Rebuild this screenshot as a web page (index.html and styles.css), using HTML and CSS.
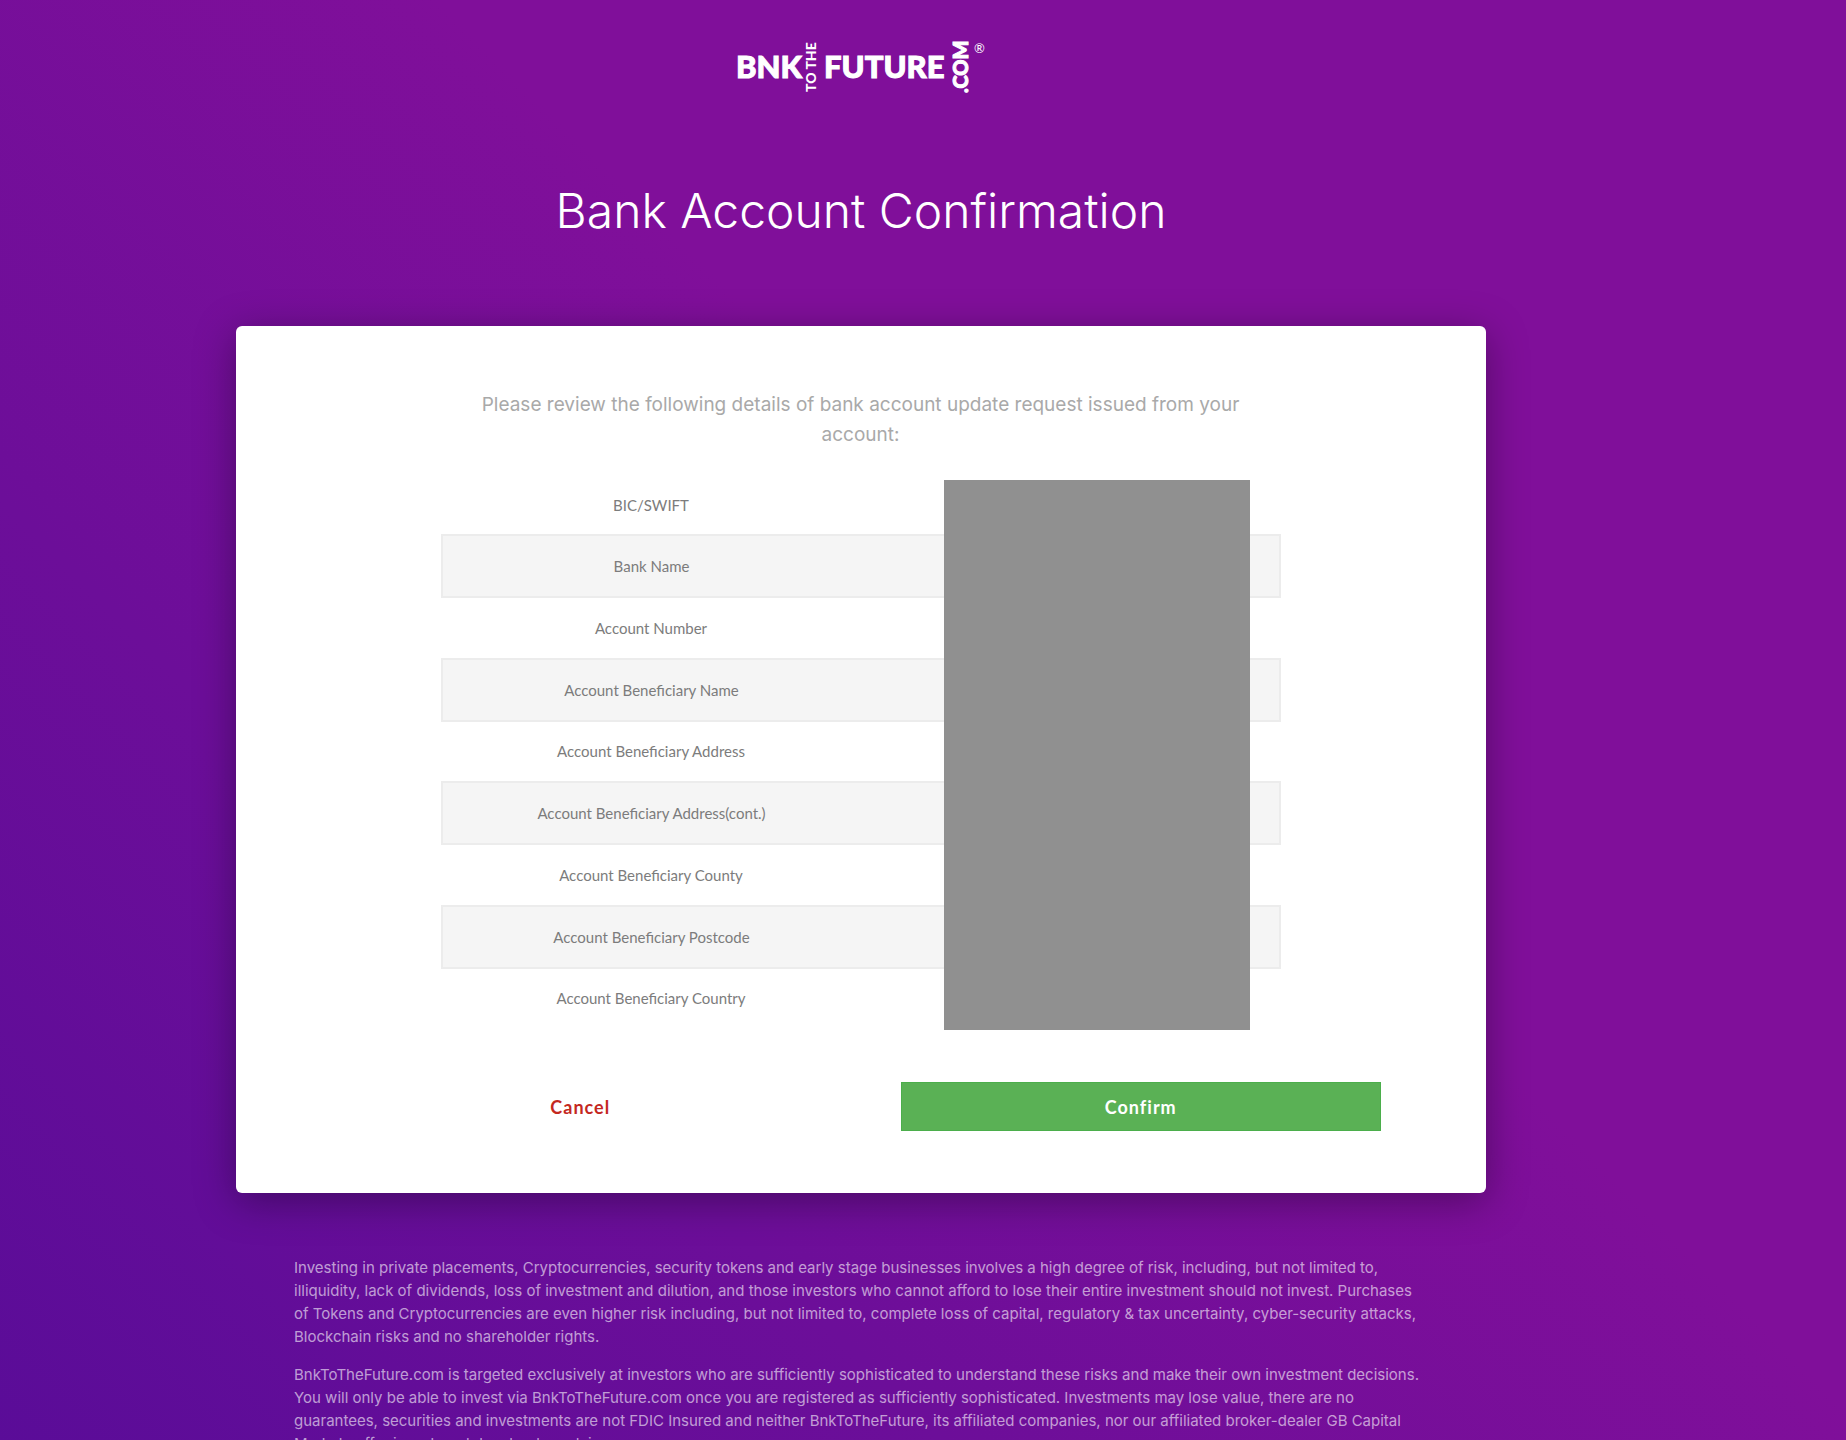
FILE: index.html
```html
<!DOCTYPE html>
<html lang="en">
<head>
    <meta charset="UTF-8">
    <meta name="viewport" content="width=device-width, initial-scale=1.0">
    <title>Bank Account Confirmation</title>
    <link rel="stylesheet" href="styles.css">
</head>
<body>
    <div class="page">
        <header>
            <a class="logo" href="#" aria-label="BnkToTheFuture.com">
                <svg width="252" height="60" viewBox="0 0 252 60">
                    <g class="logo-main">
                        <text x="1" y="40">BNK</text>
                        <text x="89" y="40">FUTURE</text>
                    </g>
                    <text class="logo-side" transform="translate(81 54) rotate(-90)">TO THE</text>
                    <text class="logo-com" transform="translate(233 55) rotate(-90)">.COM</text>
                    <text class="logo-mark" x="239" y="15">®</text>
                </svg>
            </a>
            <h1>Bank Account Confirmation</h1>
        </header>

        <main class="card">
            <p class="intro">Please review the following details of bank account update request issued from your account:</p>

            <div class="details">
                <table>
                    <tr><th scope="row">BIC/SWIFT</th><td></td></tr>
                    <tr><th scope="row">Bank Name</th><td></td></tr>
                    <tr><th scope="row">Account Number</th><td></td></tr>
                    <tr><th scope="row">Account Beneficiary Name</th><td></td></tr>
                    <tr><th scope="row">Account Beneficiary Address</th><td></td></tr>
                    <tr><th scope="row">Account Beneficiary Address(cont.)</th><td></td></tr>
                    <tr><th scope="row">Account Beneficiary County</th><td></td></tr>
                    <tr><th scope="row">Account Beneficiary Postcode</th><td></td></tr>
                    <tr><th scope="row">Account Beneficiary Country</th><td></td></tr>
                </table>
                <div class="redacted"></div>
            </div>

            <div class="actions">
                <button type="button" class="btn btn-cancel">Cancel</button>
                <button type="button" class="btn btn-confirm">Confirm</button>
            </div>
        </main>

        <footer>
            <p>
                Investing in private placements, Cryptocurrencies, security tokens and early stage businesses involves a high degree of risk, including, but not limited to,
                illiquidity, lack of dividends, loss of investment and dilution, and those investors who cannot afford to lose their entire investment should not invest. Purchases
                of Tokens and Cryptocurrencies are even higher risk including, but not limited to, complete loss of capital, regulatory &amp; tax uncertainty, cyber-security attacks,
                Blockchain risks and no shareholder rights.
            </p>
            <p>
                BnkToTheFuture.com is targeted exclusively at investors who are sufficiently sophisticated to understand these risks and make their own investment decisions.
                You will only be able to invest via BnkToTheFuture.com once you are registered as sufficiently sophisticated. Investments may lose value, there are no
                guarantees, securities and investments are not FDIC Insured and neither BnkToTheFuture, its affiliated companies, nor our affiliated broker-dealer GB Capital
                Markets offer investment, legal or tax advice.
            </p>
        </footer>
    </div>
</body>
</html>
```

FILE: styles.css
```css
* {
    box-sizing: border-box;
}
body {
    margin: 0;
    min-height: 100vh;
    font-family: Inter, sans-serif;
    background: linear-gradient(45deg, #590c98 0%, #6c0e99 30%, #800f9a 58%, #800f9a 100%);
}
.page {
    padding: 38px 124px 32px 0;
}

/* Header */
header {
    text-align: center;
}
.logo {
    display: block;
    width: 252px;
    margin: 0 auto;
}
.logo svg {
    display: block;
    fill: #fff;
    font-family: Lato, sans-serif;
    font-weight: 900;
}
.logo-main {
    font-size: 31px;
    stroke: #fff;
    stroke-width: 1px;
}
.logo-side {
    font-size: 14px;
}
.logo-com {
    font-size: 20px;
    stroke: #fff;
    stroke-width: 1px;
}
.logo-mark {
    font-size: 13px;
    font-weight: 400;
}
h1 {
    margin: 80px 0 82px;
    font-size: 48px;
    font-weight: 300;
    line-height: 66px;
    color: #fff;
}

/* Card */
.card {
    width: 1250px;
    max-width: 100%;
    margin: 0 auto;
    padding: 64px 105px 62px 104px;
    background: #fff;
    border-radius: 6px;
    box-shadow: 0 8px 40px rgba(0, 0, 0, 0.35);
}
.intro {
    max-width: 840px;
    margin: 0 auto;
    padding: 0 32px;
    font-size: 19px;
    line-height: 30px;
    text-align: center;
    color: #a9a9a9;
}

/* Details */
.details {
    position: relative;
    max-width: 840px;
    margin: 26px auto 55px;
}
table {
    width: 100%;
    height: 551px;
    border-collapse: collapse;
    table-layout: fixed;
}
th {
    padding: 0;
    font-family: Lato, sans-serif;
    font-size: 15px;
    font-weight: 400;
    color: #7c7c7c;
}
tr:nth-child(even) {
    background: #f5f5f5;
    border: 2px solid #ececec;
}
/* Hides the account values */
.redacted {
    position: absolute;
    top: 4px;
    bottom: -3px;
    left: 503px;
    width: 306px;
    background: #909090;
}

/* Buttons */
.actions {
    display: grid;
    grid-template-columns: 1fr 1fr;
    gap: 80px;
}
.btn {
    height: 49px;
    padding: 0;
    border: 0;
    font-family: Lato, sans-serif;
    font-size: 18px;
    font-weight: 700;
    letter-spacing: 1px;
    cursor: pointer;
}
.btn-cancel {
    background: transparent;
    color: #c4281f;
}
.btn-confirm {
    background: #5ab155;
    border: 1px solid #4bae4b;
    color: #fff;
}

/* Footer */
footer {
    width: 1134px;
    max-width: 100%;
    margin: 63px auto 0;
}
footer p {
    margin: 0 0 15px;
    font-size: 15px;
    line-height: 23px;
    color: rgba(255, 255, 255, 0.6);
}
```
